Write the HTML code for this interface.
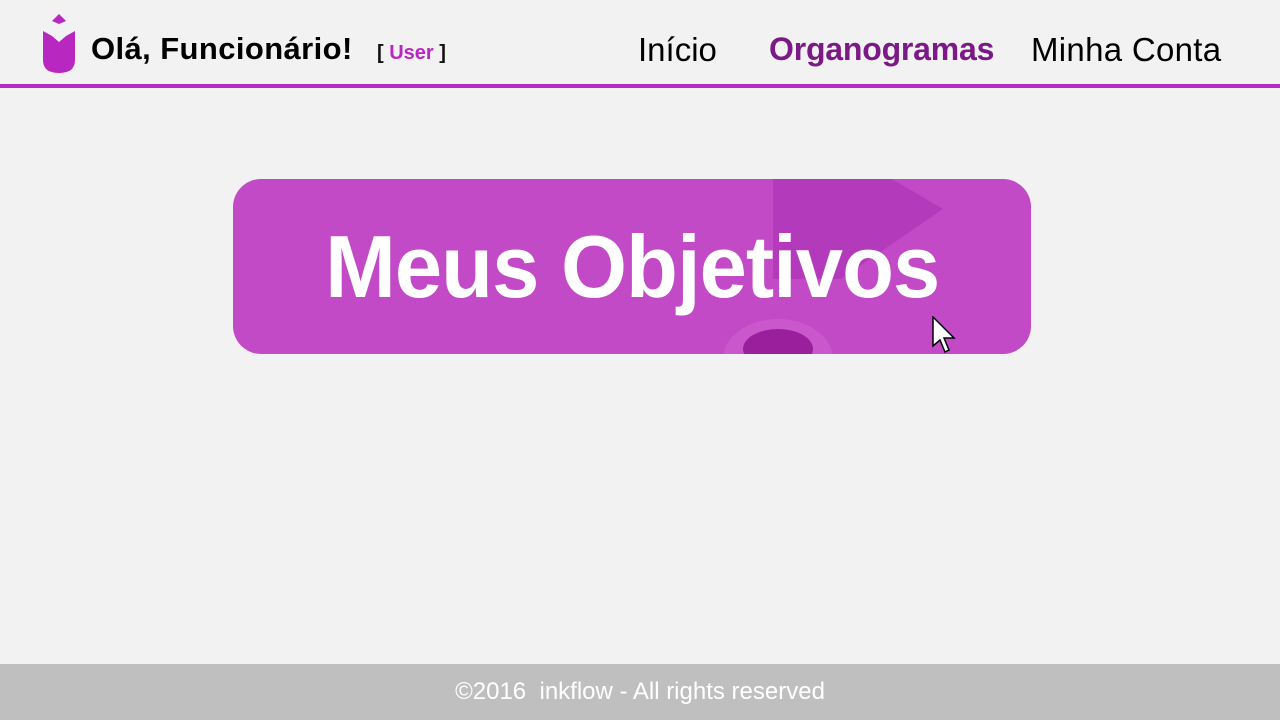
<!DOCTYPE html>
<html><head><meta charset="utf-8"><style>
body{margin:0;width:1280px;height:720px;background:#f2f2f2;position:relative;overflow:hidden;font-family:"Liberation Sans",sans-serif}
.a{position:absolute;white-space:nowrap}
</style></head><body>
<svg class="a" style="left:40px;top:12px" width="38" height="64" viewBox="0 0 38 64">
<path d="M19 2 L26 9 L19 12 L12 9 Z" fill="#b827bf"/>
<path d="M3 19 L12 24 L19 30 L26 24 L35 19 L35 48 Q35 61 19 61 Q3 61 3 48 Z" fill="#b827bf"/>
</svg>
<div class="a" style="left:91px;top:31px;font-size:31px;font-weight:bold;color:#000;letter-spacing:0.4px">Olá, Funcionário!</div>
<div class="a" style="left:377px;top:42px;font-size:20px;font-weight:bold;color:#111">[ <span style="color:#b827bf">User</span> ]</div>
<div class="a" style="left:638px;top:31px;font-size:33px;color:#000">Início</div>
<div class="a" style="left:769px;top:31px;font-size:32px;font-weight:bold;color:#7b1a86;letter-spacing:-0.2px">Organogramas</div>
<div class="a" style="left:1031px;top:31px;font-size:33px;color:#000;letter-spacing:0.3px">Minha Conta</div>
<div class="a" style="left:0;top:84px;width:1280px;height:4px;background:#b72ac1"></div>
<div class="a" style="left:233px;top:179px;width:798px;height:175px;border-radius:28px;background:#c24ac6;overflow:hidden">
<div class="a" style="left:540px;top:0;width:170px;height:100px;background:#a830b4;opacity:.6;clip-path:polygon(0 0,70% 0,100% 30%,40% 100%,0 100%)"></div>
<div class="a" style="left:490px;top:140px;width:110px;height:80px;border-radius:50%;background:#d060d0;opacity:.6"></div>
<div class="a" style="left:510px;top:150px;width:70px;height:40px;border-radius:50%;background:#9a1f9c"></div>
<div class="a" style="left:0;top:0;width:798px;height:175px;text-align:center;line-height:175px;font-size:88px;font-weight:bold;color:#fff;letter-spacing:-1px"><span style="display:inline-block;transform:scaleX(0.965)">Meus Objetivos</span></div>
</div>
<svg class="a" style="left:931px;top:316px" width="28" height="40" viewBox="0 0 28 40"><path d="M2 1 L2 30 L9 24 L14 36 L18 34 L13 22 L23 22 Z" fill="#fff" stroke="#000" stroke-width="1.5"/></svg>
<div class="a" style="left:0;top:664px;width:1280px;height:56px;background:#bfbfbf;color:#fff;font-size:24px;text-align:center;line-height:56px">©2016&nbsp; inkflow - All rights reserved</div>
</body></html>
